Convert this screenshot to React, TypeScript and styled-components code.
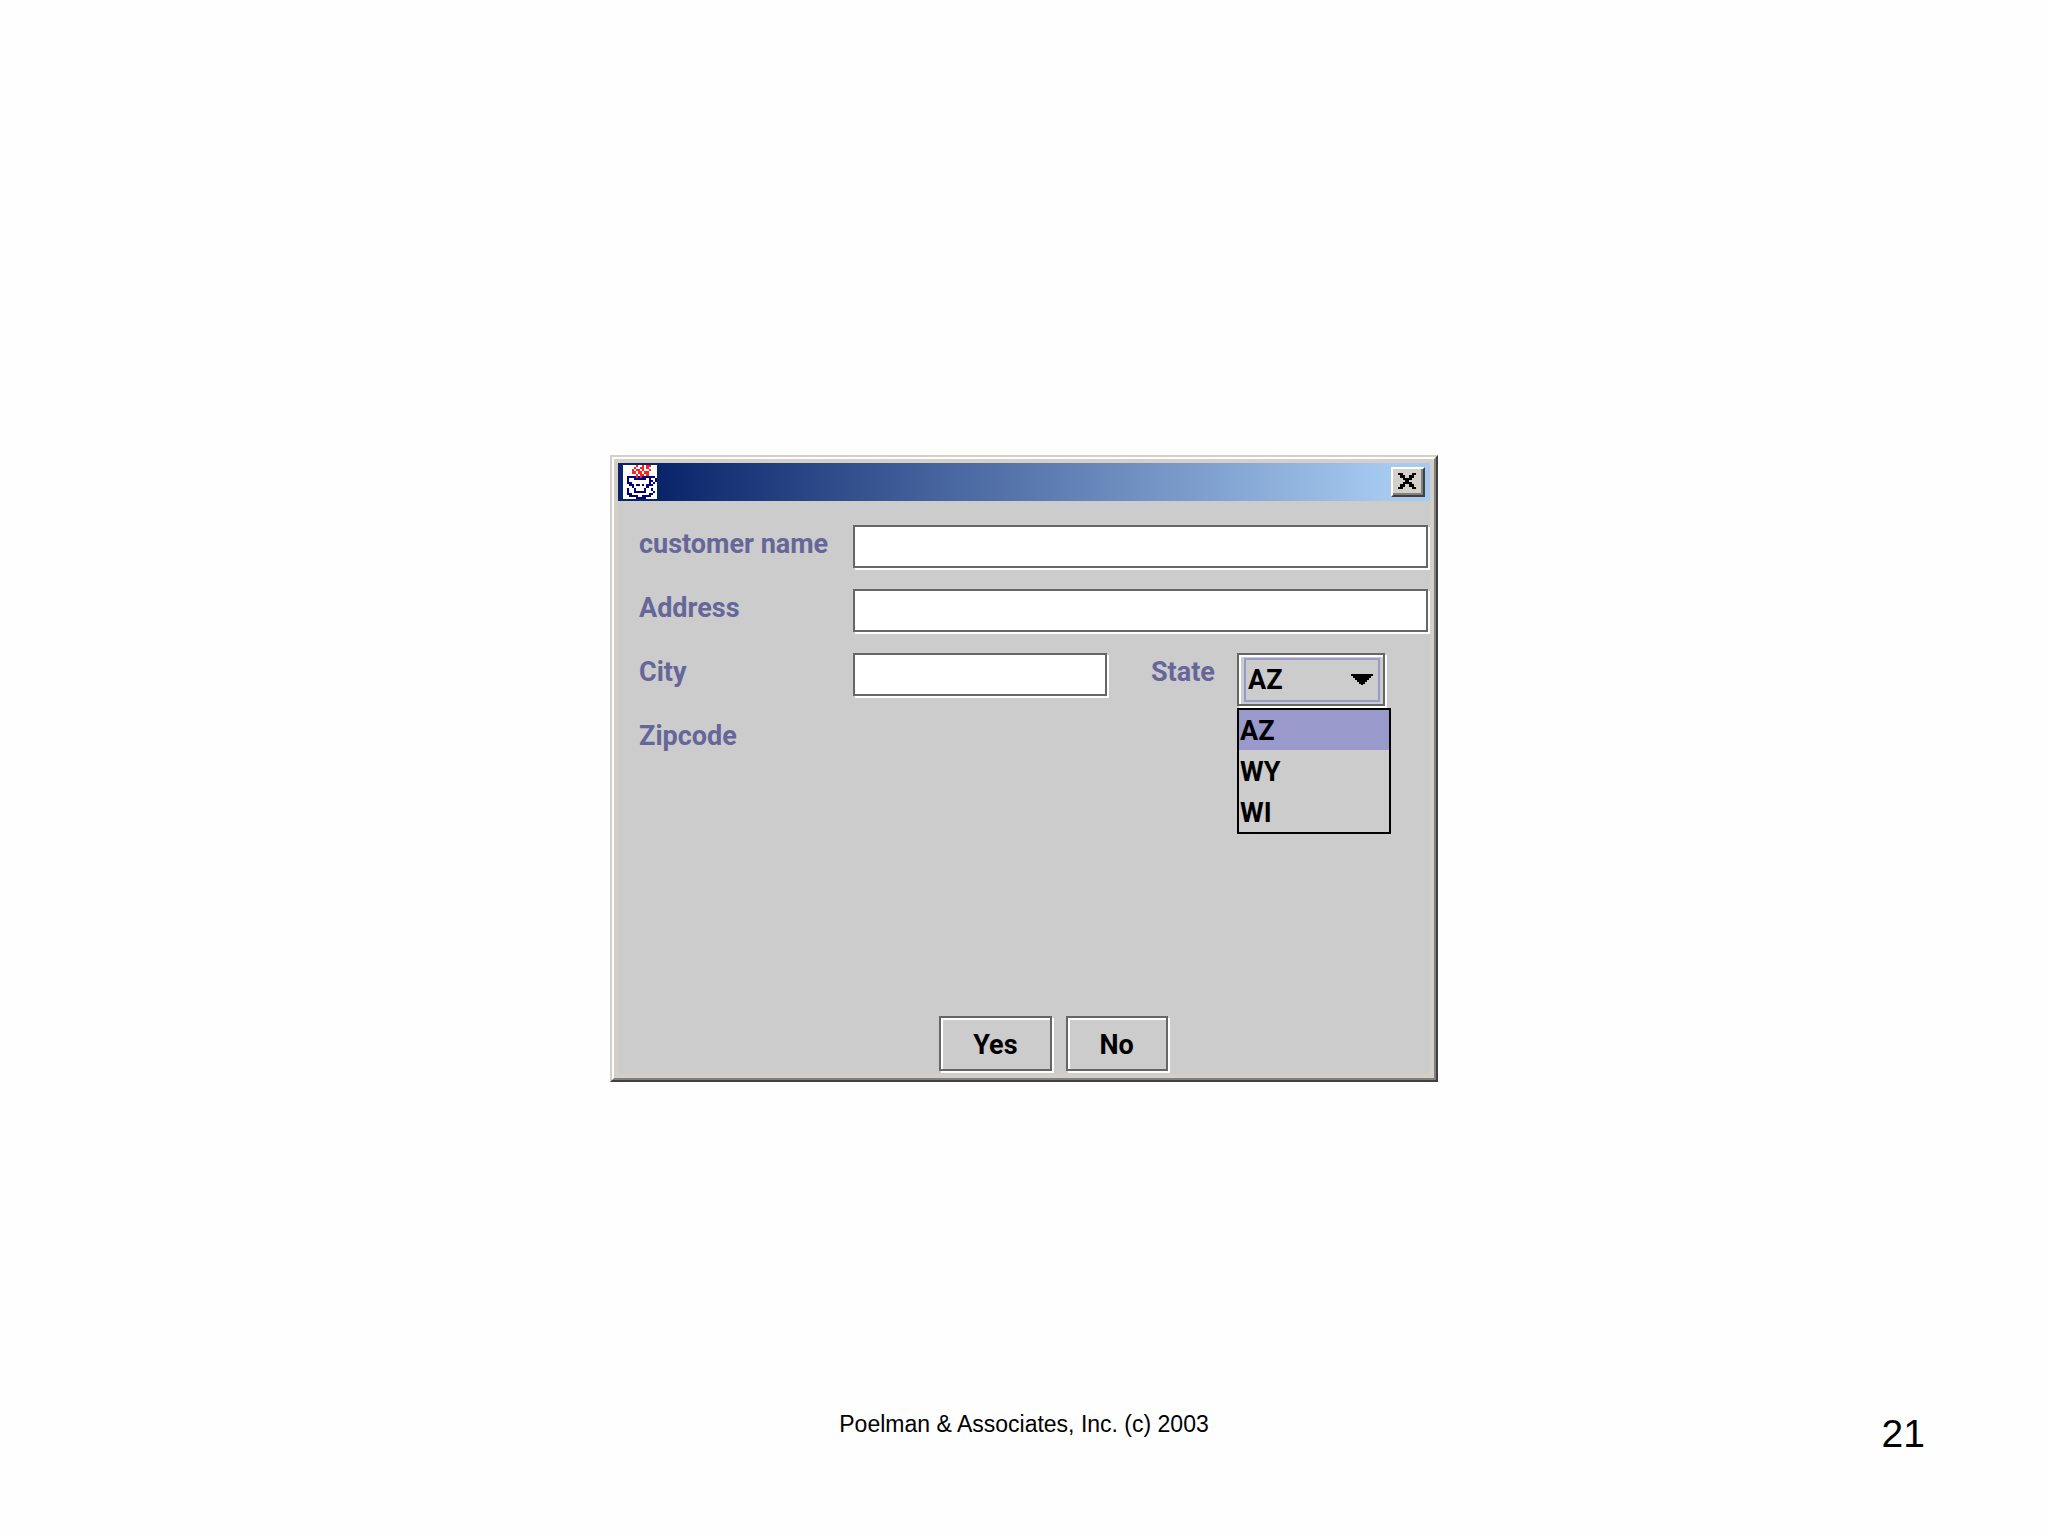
import React from "react";
import styled, { createGlobalStyle } from "styled-components";

const GlobalStyle = createGlobalStyle`
  *, *::before, *::after { box-sizing: border-box; }
  body { margin: 0; background: #fefefe; }
`;

const uiFont = `bold 27px/36px Roboto, "Liberation Sans", sans-serif`;

const Slide = styled.main`
  display: grid;
  grid-template-rows: 1fr auto 1fr;
  justify-items: center;
  min-height: 100vh;
  font-family: "Liberation Sans", Arial, sans-serif;
  color: #000;
`;

const Dialog = styled.section`
  grid-row: 2;
  width: 828px;
  max-width: 100%;
  border: 2px solid;
  border-color: #d4d0c8 #404040 #404040 #d4d0c8;
  background: #d4d0c8;
`;

const Bevel = styled.div`
  border: 2px solid;
  border-color: #fff #808080 #808080 #fff;
  padding: 4px;
`;

const TitleBar = styled.header`
  display: flex;
  align-items: center;
  justify-content: space-between;
  height: 38px;
  padding: 0 5px;
  background: linear-gradient(to right, #0a246a 5%, #a6caf0 95%);
`;

const CloseButton = styled.button`
  display: flex;
  align-items: center;
  justify-content: center;
  width: 34px;
  height: 30px;
  padding: 0 2px 2px 0;
  border: 2px solid;
  border-color: #fff #404040 #404040 #fff;
  background: #d4d0c8;
  box-shadow: inset -2px -2px 0 #808080;
`;

const Content = styled.form`
  display: flex;
  flex-direction: column;
  justify-content: space-between;
  min-height: 573px;
  padding: 24px 2px 3px 21px;
  background: #cccccd;
`;

const Fields = styled.div`
  display: grid;
  grid-template-columns: 214px 254px 130px 1fr;
  grid-auto-rows: 64px;
  align-items: start;
`;

const Label = styled.label<{ $indent?: boolean }>`
  padding: 1px 0 0 ${(p) => (p.$indent ? 44 : 0)}px;
  font: ${uiFont};
  color: #666699;
`;

const TextField = styled.input<{ $wide?: boolean }>`
  grid-column: ${(p) => (p.$wide ? "2 / -1" : "2")};
  width: 100%;
  height: 43px;
  padding: 0 6px;
  border: 2px solid #666;
  border-radius: 0;
  outline: none;
  background: #fff;
  box-shadow: 2px 2px 0 #fff;
  font: ${uiFont};
`;

const ComboBox = styled.div`
  position: relative;
  width: 148px;
  height: 53px;
  padding: 3px 3px 2px 5px;
  border: 2px solid #666;
  box-shadow: inset 2px 2px 0 #fff, 2px 2px 0 #fff;
`;

const Select = styled.select`
  display: block;
  width: 100%;
  height: 44px;
  padding: 0 2px;
  border: 2px solid #9999cc;
  border-radius: 0;
  outline: none;
  appearance: none;
  background: transparent;
  font: ${uiFont};
  color: #000;
`;

const Arrow = styled.svg`
  position: absolute;
  right: 10px;
  top: 19px;
  pointer-events: none;
`;

const Popup = styled.ul`
  position: absolute;
  left: -2px;
  top: 53px;
  display: grid;
  row-gap: 1px;
  width: 154px;
  margin: 0;
  padding: 0;
  border: 2px solid #000;
  background: #cccccd;
  list-style: none;
`;

const Option = styled.li<{ $selected?: boolean }>`
  height: 40px;
  padding: 3px 0 0 1px;
  font: ${uiFont};
  background: ${(p) => (p.$selected ? "#9999cc" : "transparent")};
`;

const Actions = styled.div`
  display: flex;
  justify-content: center;
  gap: 14px;
  padding-left: 40px;
`;

const PushButton = styled.button`
  height: 55px;
  padding: 3px 32px 0;
  border: 2px solid #666;
  background: #cccccd;
  box-shadow: inset 2px 2px 0 #fff, 2px 2px 0 #fff;
  font: ${uiFont};
  color: #000;
`;

const Footer = styled.footer`
  grid-row: 3;
  align-self: end;
  display: grid;
  grid-template-columns: 1fr auto 1fr;
  width: 100%;
  padding: 0 123px 78px;
`;

const Copyright = styled.p`
  grid-column: 2;
  margin: 0;
  font-size: 23px;
  line-height: 44px;
`;

const PageNumber = styled.p`
  grid-column: 3;
  justify-self: end;
  margin: 0;
  padding-top: 8px;
  font-size: 39px;
  line-height: 48px;
`;

const cup = [
  "......R..R.RR...",
  ".....R..RR.R....",
  "....R.RR.R..R...",
  "....RR.RR.RR....",
  "......R.RR.R....",
  "..BBBBRBRBBBBBB.",
  "..B..BBBBBB.B..B",
  "..B.........BB.B",
  "..BB........B.B.",
  "...BB.BB.B.BBB..",
  "....B......B....",
  "..B..B....B..B..",
  "..B..BBBBBB...B.",
  "..BB........BB..",
  "...BBBB..BBBB...",
  "......BBBBB.....",
];

const cross = [
  "##....##",
  ".##..##.",
  "..####..",
  "...##...",
  "..####..",
  ".##..##.",
  "##....##",
];

const pixelColors: Record<string, string> = {
  R: "#f22",
  B: "#000080",
  "#": "#000",
};

function PixelIcon({ rows, width, height, fill }: { rows: string[]; width: number; height: number; fill?: string }) {
  const cols = rows[0].length;
  return (
    <svg
      width={width}
      height={height}
      viewBox={`0 0 ${cols} ${rows.length}`}
      preserveAspectRatio="none"
      shapeRendering="crispEdges"
      aria-hidden="true"
    >
      {fill && <rect width={cols} height={rows.length} fill={fill} />}
      {rows.flatMap((row, y) =>
        [...row].map((c, x) =>
          c === "." ? null : <rect key={`${x}-${y}`} x={x} y={y} width={1} height={1} fill={pixelColors[c]} />
        )
      )}
    </svg>
  );
}

const states = ["AZ", "WY", "WI"];

export default function App() {
  const [state, setState] = React.useState("AZ");
  return (
    <>
      <GlobalStyle />
      <Slide>
        <Dialog role="dialog" aria-label="Customer">
          <Bevel>
            <TitleBar>
              <PixelIcon rows={cup} width={34} height={34} fill="#fff" />
              <CloseButton type="button" aria-label="Close">
                <PixelIcon rows={cross} width={18} height={16} />
              </CloseButton>
            </TitleBar>
            <Content onSubmit={(e) => e.preventDefault()}>
              <Fields>
                <Label htmlFor="customer">customer name</Label>
                <TextField id="customer" type="text" $wide />
                <Label htmlFor="address">Address</Label>
                <TextField id="address" type="text" $wide />
                <Label htmlFor="city">City</Label>
                <TextField id="city" type="text" />
                <Label htmlFor="state" $indent>State</Label>
                <ComboBox>
                  <Select id="state" value={state} onChange={(e) => setState(e.target.value)}>
                    {states.map((s) => (
                      <option key={s} value={s}>{s}</option>
                    ))}
                  </Select>
                  <Arrow width="22" height="11" viewBox="0 0 22 11" aria-hidden="true">
                    <path d="M0 0H22V2H20V4H18V6H16V8H14V10H12V11H10V10H8V8H6V6H4V4H2V2H0Z" fill="#000" />
                  </Arrow>
                  <Popup role="listbox" aria-label="State">
                    {states.map((s) => (
                      <Option
                        key={s}
                        role="option"
                        aria-selected={s === state}
                        $selected={s === state}
                        onClick={() => setState(s)}
                      >
                        {s}
                      </Option>
                    ))}
                  </Popup>
                </ComboBox>
                <Label as="span">Zipcode</Label>
              </Fields>
              <Actions>
                <PushButton type="submit">Yes</PushButton>
                <PushButton type="button">No</PushButton>
              </Actions>
            </Content>
          </Bevel>
        </Dialog>
        <Footer>
          <Copyright>Poelman &amp; Associates, Inc. (c) 2003</Copyright>
          <PageNumber>21</PageNumber>
        </Footer>
      </Slide>
    </>
  );
}
